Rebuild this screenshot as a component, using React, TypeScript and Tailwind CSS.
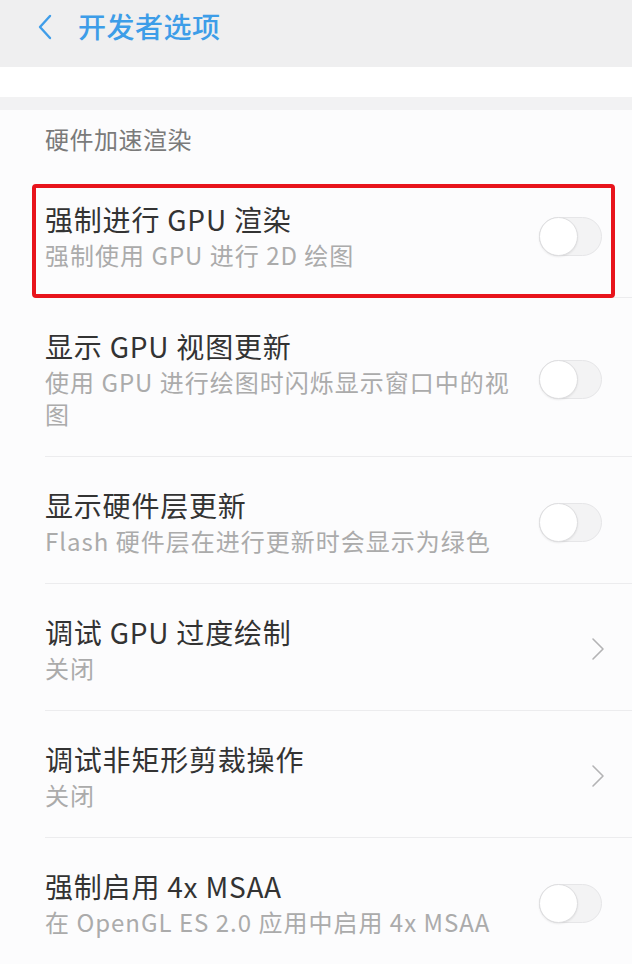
import React from "react";

const font = { fontFamily: '"Noto Sans CJK SC", "Noto Sans", sans-serif' };

function Toggle() {
  return (
    <div className="relative w-[63px] h-[39px] shrink-0 rounded-full bg-[#f3f3f4] border border-[#e6e6e8]">
      <div className="absolute left-[-1px] top-[-1px] w-[39px] h-[39px] rounded-full bg-white border border-[#dedee0] shadow-[0_1px_2px_rgba(0,0,0,0.08)]" />
    </div>
  );
}

function Chevron() {
  return (
    <svg width="14" height="24" viewBox="0 0 14 24" className="shrink-0 mr-[27px]">
      <path d="M2 2 L12 12 L2 22" fill="none" stroke="#b3b3b5" strokeWidth="1.6" strokeLinecap="round" strokeLinejoin="round" />
    </svg>
  );
}

function Row({
  title,
  sub,
  kind,
  divider = true,
}: {
  title: string;
  sub: React.ReactNode;
  kind: "toggle" | "chevron";
  divider?: boolean;
}) {
  return (
    <div className="pl-[45px]">
      <div className={`flex items-center pt-[30px] pb-[26px] ${divider ? "border-b border-[#ececee]" : ""}`}>
        <div className="flex-1 min-w-0 pr-[20px]">
          <div className="text-[28px] leading-[36px] tracking-[0.8px] text-[#333333]">{title}</div>
          <div className="mt-[2px] text-[24px] leading-[32px] tracking-[1px] text-[#ababab]">{sub}</div>
        </div>
        {kind === "toggle" ? (
          <div className="mr-[30px]">
            <Toggle />
          </div>
        ) : (
          <Chevron />
        )}
      </div>
    </div>
  );
}

export default function App() {
  return (
    <div className="w-[632px] h-[964px] overflow-hidden bg-[#fcfcfd]" style={font}>
      <div className="h-[67px] bg-[#efeff0] flex items-center">
        <svg width="16" height="26" viewBox="0 0 16 26" className="ml-[37px] mt-[-14px]">
          <path d="M13 2 L3 13 L13 24" fill="none" stroke="#3f9de9" strokeWidth="2.4" strokeLinecap="round" strokeLinejoin="round" />
        </svg>
        <div className="ml-[25px] mt-[-16px] text-[28px] leading-[36px] tracking-[0.5px] text-[#3d9de8] font-medium">开发者选项</div>
      </div>
      <div className="h-[30px] bg-white" />
      <div className="h-[13px] bg-[#f2f2f3]" />
      <div className="bg-[#fcfcfd]">
        <div className="pl-[45px] pt-[13px] pb-[16px] text-[24px] leading-[32px] tracking-[0.5px] text-[#7a7a7a]">硬件加速渲染</div>
        <div className="relative">
          <Row title="强制进行 GPU 渲染" sub="强制使用 GPU 进行 2D 绘图" kind="toggle" />
          <div className="absolute left-[32px] right-[17px] top-[13px] bottom-0 border-[4px] border-[#e8141c] rounded-[4px] pointer-events-none" />
        </div>
        <Row title="显示 GPU 视图更新" sub="使用 GPU 进行绘图时闪烁显示窗口中的视图" kind="toggle" />
        <Row title="显示硬件层更新" sub="Flash 硬件层在进行更新时会显示为绿色" kind="toggle" />
        <Row title="调试 GPU 过度绘制" sub="关闭" kind="chevron" />
        <Row title="调试非矩形剪裁操作" sub="关闭" kind="chevron" />
        <Row title="强制启用 4x MSAA" sub="在 OpenGL ES 2.0 应用中启用 4x MSAA" kind="toggle" divider={false} />
      </div>
    </div>
  );
}
